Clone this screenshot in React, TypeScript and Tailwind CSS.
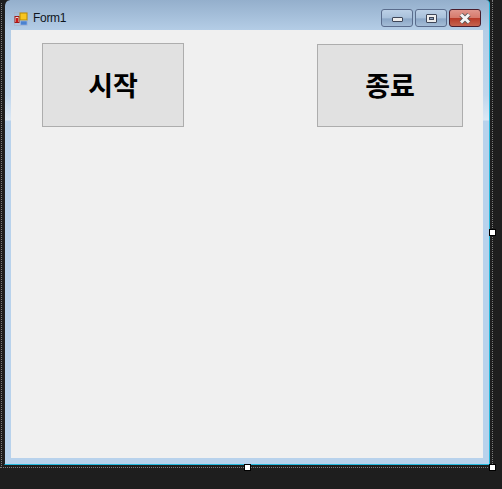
export default function App() {
  return (
    <div className="relative h-[489px] w-[502px] overflow-hidden bg-[#1e1e1e] pl-[4px]">
      {/* designer selection: dotted outline */}
      <div className="absolute left-[1px] top-[3px] h-[465px] w-0 border-l border-dotted border-[#7c7c7c]" />
      <div className="absolute left-[492px] top-0 h-[468px] w-0 border-l border-dotted border-[#7c7c7c]" />
      <div className="absolute left-0 top-[467px] h-0 w-[492px] border-t border-dotted border-[#7c7c7c]" />
      <div className="absolute left-[244px] top-[464px] h-[7px] w-[7px] border border-black bg-white" />
      <div className="absolute left-[489px] top-[229px] h-[7px] w-[7px] border border-black bg-white" />
      <div className="absolute left-[489px] top-[464px] h-[7px] w-[7px] border border-black bg-white" />

      {/* form window */}
      <div className="flex h-[465px] w-[486px] flex-col rounded-tl-[6px] rounded-tr-[4px] border-b border-l border-r border-b-[#22b8dc] border-l-[#1e1e1e] border-r-[#22b8dc] bg-[linear-gradient(to_bottom,#94afcc_0px,#b4cde6_30px,#c0d6ec_95px,#dbe8f5_120px,#b8d2ec_121px,#b8d2ec_100%)] pb-[6px] pl-[6px] pr-[6px]">
        <div className="flex h-[30px] shrink-0 items-center pt-[6px] pl-[3px] pr-[2px]">
          <svg width="14" height="14" viewBox="0 0 14 14" className="mt-[1px]">
            <rect x="0.5" y="0.5" width="13" height="13" fill="none" stroke="#a8aec4" strokeWidth="0.5" />
            <rect x="1" y="4.5" width="4" height="6" fill="#e8e0d8" stroke="#a01818" />
            <rect x="2" y="6" width="2" height="4" fill="#cc1a1a" />
            <rect x="6" y="1" width="7" height="7" fill="#f7c520" stroke="#b88a00" />
            <rect x="6.5" y="9" width="6.5" height="4" fill="#4a82d0" stroke="#9ab8e4" strokeWidth="0.6" />
          </svg>
          <span className="ml-[5px] text-[12px] tracking-[-0.3px] text-[#10161e] [font-family:'Liberation_Sans',sans-serif]">Form1</span>
          <div className="ml-auto flex gap-[2px]">
            <div className="flex h-[18px] w-[32px] items-center justify-center rounded-[3px] border border-[#5a6c8c] bg-[linear-gradient(to_bottom,#bcd0e6_0%,#a8c0da_50%,#8aa6c6_55%,#a4bcd6_100%)]">
              <div className="mt-[2px] h-[5px] w-[11px] rounded-[1px] border border-[#3e4658] bg-[#ececec]" />
            </div>
            <div className="flex h-[18px] w-[32px] items-center justify-center rounded-[3px] border border-[#5a6c8c] bg-[linear-gradient(to_bottom,#bcd0e6_0%,#a8c0da_50%,#8aa6c6_55%,#a4bcd6_100%)]">
              <div className="flex h-[9px] w-[11px] items-center justify-center rounded-[1px] border border-[#3e4658] bg-[#ececec]">
                <div className="h-[3px] w-[5px] border border-[#3e4658] bg-[#8ea4c0]" />
              </div>
            </div>
            <div className="flex h-[18px] w-[32px] items-center justify-center rounded-[3px] border border-[#4a1c2c] bg-[linear-gradient(to_bottom,#e0968c_0%,#d67a6c_48%,#b83a28_52%,#c46450_100%)]">
              <svg width="14" height="11" viewBox="0 0 14 11">
                <path d="M3 1.5 L11 9.5 M11 1.5 L3 9.5" stroke="#555" strokeWidth="4.6" />
                <path d="M3 1.5 L11 9.5 M11 1.5 L3 9.5" stroke="#f4f4f4" strokeWidth="3" />
              </svg>
            </div>
          </div>
        </div>
        <div className="flex min-h-0 flex-1 items-start justify-between bg-[#f0f0f0] pl-[31px] pr-[20px]">
          <button className="mt-[13px] flex h-[84px] w-[142px] items-center justify-center border border-[#adadad] bg-[#e1e1e1] text-[27px] font-bold text-black [font-family:'Noto_Sans_CJK_KR',sans-serif]">
            시작
          </button>
          <button className="mt-[14px] flex h-[83px] w-[146px] items-center justify-center border border-[#adadad] bg-[#e1e1e1] text-[27px] font-bold text-black [font-family:'Noto_Sans_CJK_KR',sans-serif]">
            종료
          </button>
        </div>
      </div>
    </div>
  );
}
